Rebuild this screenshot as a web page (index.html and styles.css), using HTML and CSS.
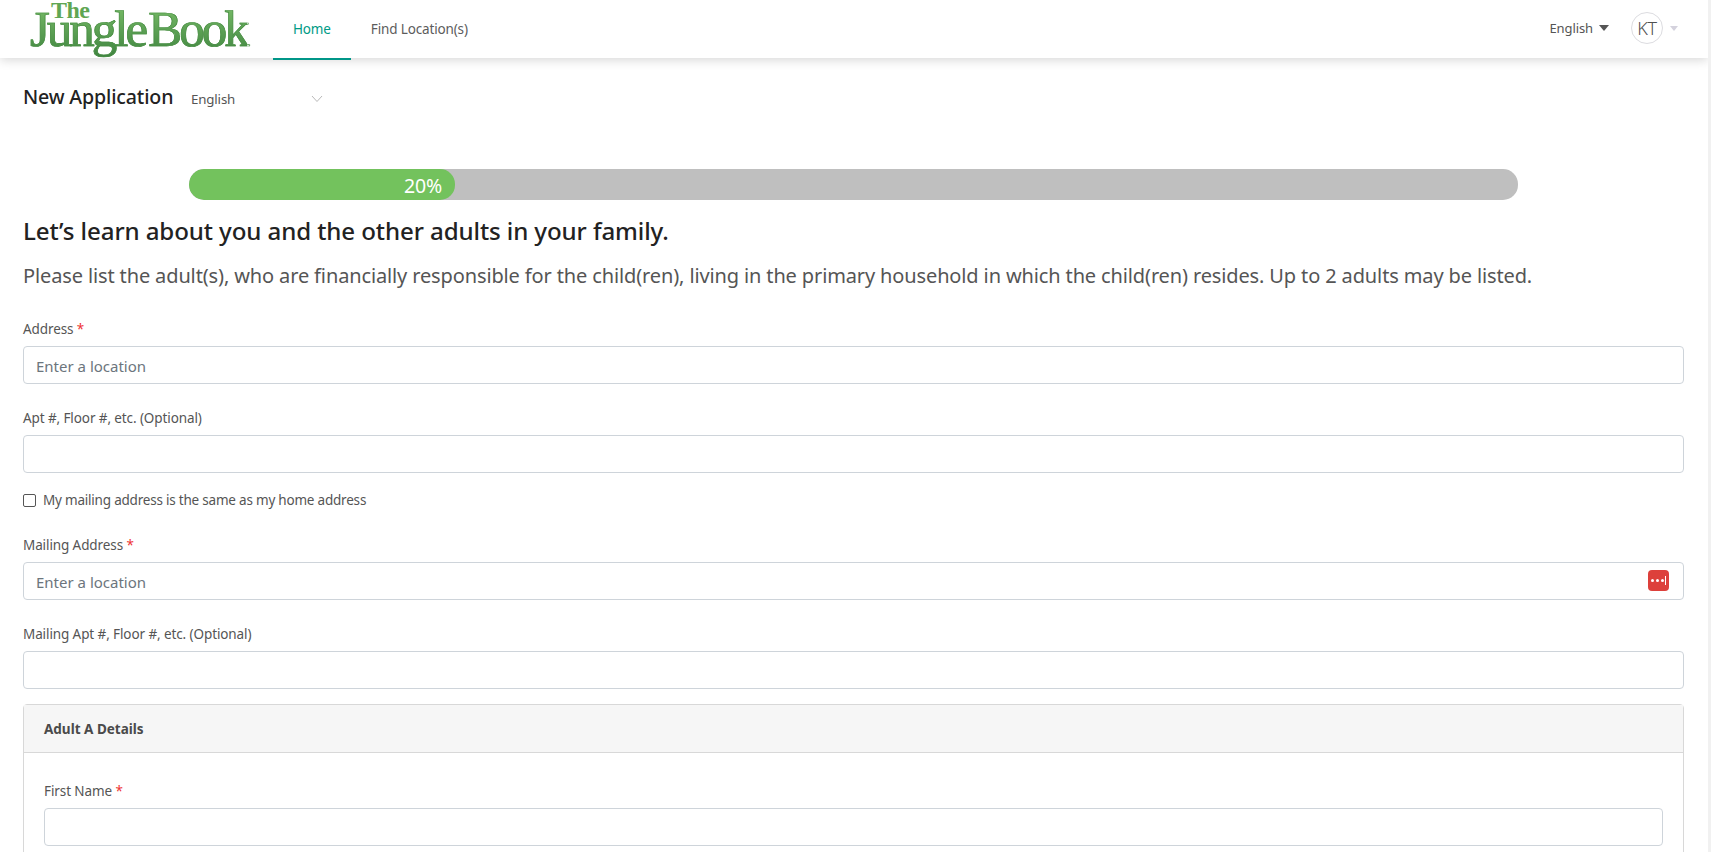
FILE: index.html
```html
<!DOCTYPE html>
<html lang="en">
<head>
<meta charset="utf-8">
<title>New Application</title>
<link rel="stylesheet" href="styles.css">
</head>
<body>
<div class="app">
  <header class="topbar">
    <a class="logo"><span class="logo-the">The</span><span class="logo-main">Jungle<span class="logo-book">Book</span></span></a>
    <nav class="nav">
      <a class="nav-item active">Home</a>
      <a class="nav-item">Find Location(s)</a>
    </nav>
    <div class="top-right">
      <span class="lang">English<i class="caret dark"></i></span>
      <span class="avatar">KT</span>
      <i class="caret light"></i>
    </div>
  </header>
  <main class="content">
    <div class="title-row">
      <h1 class="title">New Application</h1>
      <div class="lang-select">
        <span>English</span>
        <svg class="chev" width="12" height="8" viewBox="0 0 12 8"><path d="M1 1l5 5.5L11 1" fill="none" stroke="#b9b9b9" stroke-width="1"/></svg>
      </div>
    </div>
    <div class="progress"><div class="progress-fill">20%</div></div>
    <h2 class="heading">Let’s learn about you and the other adults in your family.</h2>
    <p class="lead">Please list the adult(s), who are financially responsible for the child(ren), living in the primary household in which the child(ren) resides. Up to 2 adults may be listed.</p>
    <div class="field">
      <label class="label">Address <b class="req">*</b></label>
      <input class="input" placeholder="Enter a location">
    </div>
    <div class="field">
      <label class="label">Apt #, Floor #, etc. (Optional)</label>
      <input class="input">
    </div>
    <label class="check"><input type="checkbox" class="checkbox">My mailing address is the same as my home address</label>
    <div class="field">
      <label class="label">Mailing Address <b class="req">*</b></label>
      <div class="input-wrap">
        <input class="input" placeholder="Enter a location">
        <span class="pw-badge"><i></i><i></i><i></i><u></u></span>
      </div>
    </div>
    <div class="field">
      <label class="label">Mailing Apt #, Floor #, etc. (Optional)</label>
      <input class="input">
    </div>
    <section class="card">
      <div class="card-head">Adult A Details</div>
      <div class="card-body">
        <div class="field">
          <label class="label">First Name <b class="req">*</b></label>
          <input class="input">
        </div>
      </div>
    </section>
  </main>
</div>
<div class="scrollbar"></div>
</body>
</html>
```
FILE: styles.css
```css
* { box-sizing: border-box; }
html, body { margin: 0; height: 100%; overflow: hidden; }
body { display: flex; background: #fff; color: #555; font-family: "Noto Sans", "Open Sans", sans-serif; font-size: 13px; }
.app { flex: 1; min-width: 0; height: 852px; overflow: hidden; }
.scrollbar { width: 3px; background: #f1f1f1; }

.topbar { height: 58px; display: flex; align-items: stretch; background: #fff; box-shadow: 0 2px 10px rgba(0,0,0,.16); position: relative; }
.logo { position: relative; width: 273px; flex: none; display: block; }
.logo-main { position: absolute; left: 30px; top: 1px; font-family: "Liberation Serif", serif; font-size: 51px; line-height: 56px; letter-spacing: -3px; white-space: nowrap; background: linear-gradient(#7cc06a, #3f8440); -webkit-background-clip: text; background-clip: text; color: transparent; -webkit-text-stroke: .7px #4a8f45; }
.logo-book { margin-left: 3px; }
.logo-the { position: absolute; left: 51px; top: 1px; font-family: "Liberation Serif", serif; font-size: 24px; line-height: 18px; letter-spacing: -.6px; color: #5fa653; font-weight: 700; }
.nav { display: flex; }
.nav-item { display: flex; align-items: center; padding: 0 20px 1px; font-size: 13.5px; color: #5c5c5c; letter-spacing: -.15px; border-bottom: 2px solid transparent; height: 60px; }
.nav-item.active { color: #009b85; border-bottom-color: #009688; }
.top-right { margin-left: auto; display: flex; align-items: center; padding-right: 30px; padding-bottom: 2px; }
.lang { display: flex; align-items: center; font-size: 13px; letter-spacing: -.1px; color: #555; }
.caret { display: inline-block; width: 0; height: 0; border-left: 5px solid transparent; border-right: 5px solid transparent; border-top: 6px solid #555; }
.caret.dark { margin-left: 6px; }
.caret.light { border-left-width: 4px; border-right-width: 4px; border-top: 5px solid #d4d2dd; margin-left: 7px; }
.avatar { width: 32px; height: 32px; margin-left: 22px; border-radius: 50%; border: 1px solid #dcdce0; display: flex; align-items: center; justify-content: center; font-size: 18px; color: #505050; font-weight: 300; letter-spacing: -.4px; }

.content { padding: 0 24px 0 23px; }
.title-row { display: flex; align-items: center; height: 40px; margin-top: 18px; }
.title { margin: 0; font-size: 19.6px; font-weight: 500; color: #222; letter-spacing: -.15px; width: 168px; white-space: nowrap; }
.lang-select { display: flex; align-items: center; width: 133px; justify-content: space-between; font-size: 13.3px; letter-spacing: -.15px; padding-top: 5px; padding-right: 1px; }
.progress { margin: 53px 0 0 166px; width: 1329px; height: 31px; background: #bfbfbf; border-radius: 15px; overflow: hidden; }
.progress-fill { width: 266px; height: 31px; background: #73c25d; border-radius: 15px; color: #fff; font-size: 19.5px; line-height: 33px; text-align: right; padding-right: 13px; letter-spacing: -.2px; }
.heading { margin: 15px 0 0 0; font-size: 24.1px; line-height: 32px; font-weight: 500; color: #222; letter-spacing: -.1px; }
.lead { margin: 15px 0 0; font-size: 20px; line-height: 28px; color: #555; letter-spacing: -.13px; white-space: nowrap; }
.field { margin-top: 25px; }
.lead + .field { margin-top: 30px; }
.label { display: block; font-size: 13.5px; line-height: 18px; color: #555; margin-bottom: 8px; letter-spacing: -.1px; }
.req { color: #e33; font-weight: 400; }
.input { display: block; width: 100%; height: 38px; border: 1px solid #ced4da; border-radius: 4px; padding: 2px 12px 0; font: 15px "Noto Sans", sans-serif; background: #fff; color: #555; outline: none; }
.input::placeholder { color: #6c757d; opacity: 1; }
.input-wrap { position: relative; }
.pw-badge { position: absolute; right: 15px; top: 8px; width: 21px; height: 21px; border-radius: 4px; background: #dd403b; display: flex; align-items: center; gap: 2px; padding-left: 3px; }
.pw-badge i { width: 3px; height: 3px; border-radius: 50%; background: #fff; flex: none; }
.pw-badge u { width: 1px; height: 9px; background: #fff; margin-left: -1px; flex: none; }
.check { display: flex; align-items: center; margin-top: 18px; font-size: 13.5px; line-height: 18px; color: #555; letter-spacing: -.21px; }
.checkbox { appearance: none; -webkit-appearance: none; width: 13px; height: 13px; margin: 0 7px 0 0; border: 1px solid #555; border-radius: 2px; background: #fff; }
.check + .field { margin-top: 27px; }
.card { margin-top: 15px; border: 1px solid #d8d8d8; border-radius: 4px; height: 300px; }
.card-head { height: 48px; padding: 0 20px; display: flex; align-items: center; background: #f6f6f6; border-bottom: 1px solid #d8d8d8; font-size: 13.5px; font-weight: 700; color: #4a4a4a; }
.card-body { padding: 0 20px; }
.card-body .field { margin-top: 29px; }
```
